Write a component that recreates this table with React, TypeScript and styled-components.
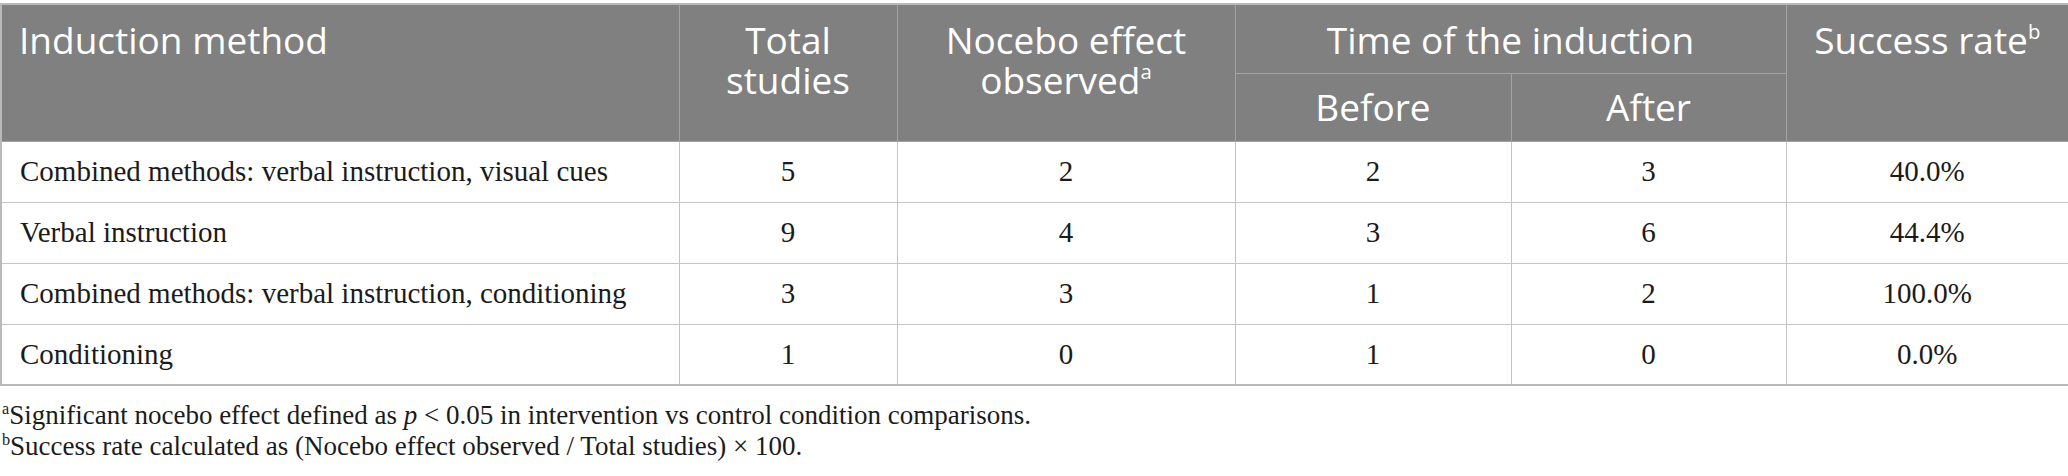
import React from "react";
import styled, { createGlobalStyle } from "styled-components";

const Global = createGlobalStyle`
  html, body { margin: 0; padding: 0; background: #ffffff; }
  body { width: 2068px; }
`;

const Page = styled.div`
  padding-top: 3px;
  width: 2068px;
`;

const Table = styled.table`
  width: 2068px;
  border-collapse: collapse;
  table-layout: fixed;
  border: 2px solid #b9b9b9;
`;

const HeadCell = styled.th<{ $align?: "left" | "center" }>`
  background: #7f807f;
  color: #ffffff;
  font-family: "Open Sans", "Noto Sans", sans-serif;
  font-weight: 400;
  font-size: 37px;
  line-height: 40px;
  text-align: ${(p) => p.$align ?? "center"};
  vertical-align: top;
  padding: ${(p) => (p.$align === "left" ? "15px 0 0 17px" : "15px 0 0 0")};
  border: 1px solid #a3a3a3;
  box-sizing: border-box;
`;

const SubHeadCell = styled(HeadCell)`
  padding: 13px 0 0 0;
`;

const Sup = styled.sup`
  font-size: 0.55em;
  line-height: 0;
  vertical-align: 0.75em;
`;

const Row = styled.tr`
  height: 61px;
`;

const Cell = styled.td<{ $align?: "left" | "center" }>`
  font-family: "Liberation Serif", "Times New Roman", serif;
  font-size: 29px;
  color: #1b1b1b;
  text-align: ${(p) => p.$align ?? "center"};
  vertical-align: middle;
  padding: ${(p) => (p.$align === "left" ? "0 0 0 18px" : "0")};
  border: 1px solid #c4c4c4;
`;

const Notes = styled.div`
  padding: 14px 0 0 2px;
  font-family: "Liberation Serif", "Times New Roman", serif;
  font-size: 27px;
  line-height: 31px;
  color: #1b1b1b;
`;

const Note = styled.p`
  margin: 0;
`;

const NoteSup = styled.sup`
  font-size: 0.6em;
  line-height: 0;
  vertical-align: 0.6em;
`;

type Rec = { method: string; total: number; obs: number; before: number; after: number; rate: string };

const rows: Rec[] = [
  { method: "Combined methods: verbal instruction, visual cues", total: 5, obs: 2, before: 2, after: 3, rate: "40.0%" },
  { method: "Verbal instruction", total: 9, obs: 4, before: 3, after: 6, rate: "44.4%" },
  { method: "Combined methods: verbal instruction, conditioning", total: 3, obs: 3, before: 1, after: 2, rate: "100.0%" },
  { method: "Conditioning", total: 1, obs: 0, before: 1, after: 0, rate: "0.0%" },
];

export default function App() {
  return (
    <Page>
      <Global />
      <Table>
        <colgroup>
          <col style={{ width: 678 }} />
          <col style={{ width: 218 }} />
          <col style={{ width: 338 }} />
          <col style={{ width: 276 }} />
          <col style={{ width: 275 }} />
          <col style={{ width: 283 }} />
        </colgroup>
        <thead>
          <tr style={{ height: 69 }}>
            <HeadCell rowSpan={2} $align="left">Induction method</HeadCell>
            <HeadCell rowSpan={2}>Total<br />studies</HeadCell>
            <HeadCell rowSpan={2}>Nocebo effect<br />observed<Sup>a</Sup></HeadCell>
            <HeadCell colSpan={2}>Time of the induction</HeadCell>
            <HeadCell rowSpan={2}>Success rate<Sup>b</Sup></HeadCell>
          </tr>
          <tr style={{ height: 68 }}>
            <SubHeadCell>Before</SubHeadCell>
            <SubHeadCell>After</SubHeadCell>
          </tr>
        </thead>
        <tbody>
          {rows.map((r) => (
            <Row key={r.method}>
              <Cell $align="left">{r.method}</Cell>
              <Cell>{r.total}</Cell>
              <Cell>{r.obs}</Cell>
              <Cell>{r.before}</Cell>
              <Cell>{r.after}</Cell>
              <Cell>{r.rate}</Cell>
            </Row>
          ))}
        </tbody>
      </Table>
      <Notes>
        <Note>
          <NoteSup>a</NoteSup>Significant nocebo effect defined as <i>p</i> &lt; 0.05 in intervention vs control condition comparisons.
        </Note>
        <Note>
          <NoteSup>b</NoteSup>Success rate calculated as (Nocebo effect observed / Total studies) × 100.
        </Note>
      </Notes>
    </Page>
  );
}
